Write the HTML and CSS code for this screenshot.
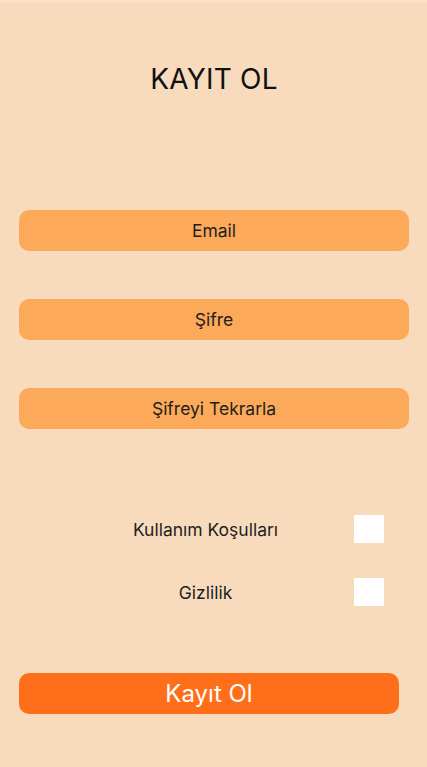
FILE: index.html
```html
<!DOCTYPE html>
<html lang="tr">
<head>
<meta charset="utf-8">
<title>Kayıt Ol</title>
<link rel="stylesheet" href="styles.css">
</head>
<body>
<main class="page">
  <h1 class="title">KAYIT OL</h1>
  <div class="fields">
    <div class="field">Email</div>
    <div class="field">Şifre</div>
    <div class="field">Şifreyi Tekrarla</div>
  </div>
  <div class="checks">
    <div class="check-row">
      <span class="check-label">Kullanım Koşulları</span>
      <span class="box"></span>
    </div>
    <div class="check-row">
      <span class="check-label">Gizlilik</span>
      <span class="box"></span>
    </div>
  </div>
  <button class="submit">Kayıt Ol</button>
</main>
</body>
</html>
```
FILE: styles.css
```css
* { box-sizing: border-box; }
html, body {
  margin: 0;
  padding: 0;
  background: #F8DBBD;
}
body {
  font-family: Inter, "Noto Sans", sans-serif;
  color: #1a1a1a;
  width: 427px;
  height: 767px;
  border-top: 2px solid #F9E2CA;
}
.page {
  display: flex;
  flex-direction: column;
  padding: 0 18px 0 19px;
}
.title {
  margin: 60px 0 0;
  font-size: 28px;
  font-weight: 400;
  line-height: 34px;
  text-align: center;
  letter-spacing: 0.2px;
  color: #111;
}
.fields {
  display: flex;
  flex-direction: column;
  gap: 48px;
  margin-top: 114px;
}
.field {
  height: 41px;
  border-radius: 10px;
  background: #FCA95A;
  display: flex;
  align-items: center;
  justify-content: center;
  font-size: 17.5px;
  color: #1e1e1e;
}
.checks {
  display: flex;
  flex-direction: column;
  gap: 35px;
  margin-top: 86px;
}
.check-row {
  display: grid;
  grid-template-columns: 1fr 30px;
  align-items: center;
  padding: 0 25px 0 0;
}
.check-label {
  font-size: 17.5px;
  text-align: center;
  padding-left: 38px;
  color: #1e1e1e;
}
.box {
  width: 30px;
  height: 28px;
  background: #ffffff;
}
.submit {
  margin-top: 67px;
  width: 380px;
  height: 41px;
  border: none;
  border-radius: 10px;
  background: #FF6F1A;
  color: #ffffff;
  font-family: Inter, "Noto Sans", sans-serif;
  font-size: 24px;
  padding: 0;
}
```
